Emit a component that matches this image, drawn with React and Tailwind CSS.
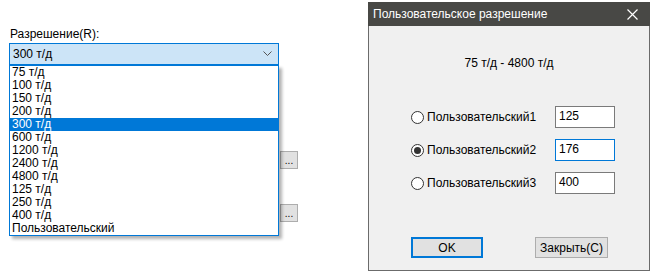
import React from 'react';

const items = ['75 т/д', '100 т/д', '150 т/д', '200 т/д', '300 т/д', '600 т/д', '1200 т/д', '2400 т/д', '4800 т/д', '125 т/д', '250 т/д', '400 т/д', 'Пользовательский'];

const rows = [
  { label: 'Пользовательский1', value: '125', checked: false },
  { label: 'Пользовательский2', value: '176', checked: true },
  { label: 'Пользовательский3', value: '400', checked: false },
];

function Radio({ checked }) {
  return (
    <span className="flex h-[13px] w-[13px] items-center justify-center rounded-full border border-[#333] bg-white">
      {checked && <span className="h-[7px] w-[7px] rounded-full bg-[#333]" />}
    </span>
  );
}

export default function App() {
  return (
    <div className="flex h-[271px] w-[650px] overflow-hidden bg-white font-['Liberation_Sans',sans-serif] text-[12px] leading-[14px] text-black">
      {/* left: resolution combobox with open list */}
      <div className="relative w-[368px] shrink-0">
        <div className="pl-[10px] pt-[27px]">Разрешение(R):</div>
        <div className="ml-[9px] mt-[2px] flex h-[22px] w-[270px] items-center justify-between border border-[#0078d7] bg-[#cce4f7] pl-[3px] pr-[6px]">
          <span>300 т/д</span>
          <svg width="9" height="6" viewBox="0 0 9 6" fill="none" stroke="#555" strokeWidth="1">
            <path d="M0.5 0.5 L4.5 4.5 L8.5 0.5" />
          </svg>
        </div>
        <div className="ml-[280px] mt-[86px] flex h-[18px] w-[18px] items-end justify-center border border-[#adadad] bg-[#e1e1e1] pb-[2px] text-[10px] leading-[10px]">...</div>
        <div className="ml-[280px] mt-[35px] flex h-[18px] w-[18px] items-end justify-center border border-[#adadad] bg-[#e1e1e1] pb-[2px] text-[10px] leading-[10px]">...</div>

        <div className="absolute left-[9px] top-[65px] w-[270px] border border-[#0078d7] bg-white shadow-[3px_3px_3px_rgba(0,0,0,0.3)]">
          {items.map((it) => (
            <div
              key={it}
              className={
                it === '300 т/д'
                  ? 'h-[13px] bg-[#0078d7] pl-[2px] leading-[13px] text-white'
                  : 'h-[13px] pl-[2px] leading-[13px]'
              }
            >
              {it}
            </div>
          ))}
        </div>
      </div>

      {/* right: custom resolution dialog */}
      <div className="mt-[2px] flex h-[269px] w-[282px] shrink-0 flex-col">
        <div className="flex h-[24px] items-center justify-between bg-[#484845] pl-[5px] pr-[12px] text-white">
          <span>Пользовательское разрешение</span>
          <svg width="11" height="11" viewBox="0 0 11 11" stroke="#fff" strokeWidth="1.2">
            <path d="M0.5 0.5 L10.5 10.5 M10.5 0.5 L0.5 10.5" />
          </svg>
        </div>
        <div className="flex flex-1 flex-col border-x border-b border-[#6b6b6b] bg-[#f0f0f0]">
          <div className="pt-[30px] text-center">75 т/д - 4800 т/д</div>
          <div className="mt-[36px] flex flex-col gap-[11px]">
            {rows.map((r) => (
              <div key={r.label} className="flex h-[22px] items-center pl-[42px]">
                <div className="flex w-[144px] items-center gap-[3px]">
                  <Radio checked={r.checked} />
                  <span>{r.label}</span>
                </div>
                <div
                  className={
                    r.checked
                      ? 'h-[22px] w-[60px] border border-[#0078d7] bg-white pl-[3px] pt-[2px]'
                      : 'h-[22px] w-[60px] border border-[#7a7a7a] bg-white pl-[3px] pt-[2px]'
                  }
                >
                  {r.value}
                </div>
              </div>
            ))}
          </div>
          <div className="mt-[43px] flex pl-[42px]">
            <div className="flex h-[21px] w-[72px] items-center justify-center border-2 border-[#0078d7] bg-[#e1e1e1]">OK</div>
            <div className="ml-[52px] flex h-[21px] w-[73px] items-center justify-center border border-[#adadad] bg-[#e1e1e1]">Закрыть(C)</div>
          </div>
        </div>
      </div>
    </div>
  );
}
